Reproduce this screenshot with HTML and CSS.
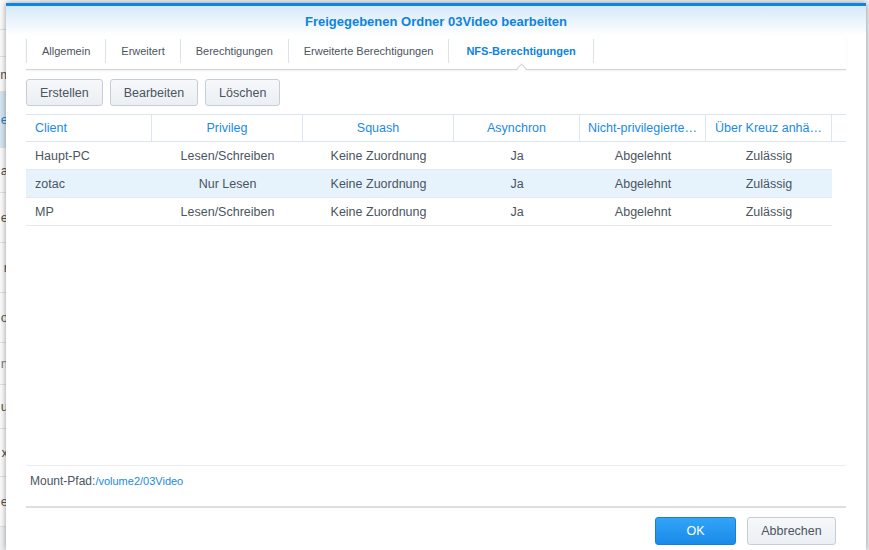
FILE: index.html
```html
<!DOCTYPE html>
<html lang="de">
<head>
    <meta charset="UTF-8">
    <meta name="viewport" content="width=device-width, initial-scale=1.0">
    <title>Freigegebenen Ordner 03Video bearbeiten</title>
    <link rel="stylesheet" href="styles.css">
</head>
<body>
    <!-- Hintergrund: Liste der Systemsteuerung, nur am Rand sichtbar -->
    <div class="backdrop">
        <div class="side-row h30"></div>
        <div class="side-row h27"></div>
        <div class="side-row h35 wide"><span>m</span></div>
        <div class="side-row h56 selected"><span>e</span></div>
        <div class="side-row h45"><span>a</span></div>
        <div class="side-row h50"><span>e</span></div>
        <div class="side-row h50"><span>r</span></div>
        <div class="side-row h50"><span>o</span></div>
        <div class="side-row h42 muted"><span>n</span></div>
        <div class="side-row h44"><span>u</span></div>
        <div class="side-row h48"><span>x</span></div>
        <div class="side-row h50"><span>e</span></div>
    </div>

    <div class="dialog">
        <div class="dialog-header">Freigegebenen Ordner 03Video bearbeiten</div>

        <div class="dialog-body">
            <div class="tabs">
                <div class="tab">Allgemein</div>
                <div class="tab">Erweitert</div>
                <div class="tab">Berechtigungen</div>
                <div class="tab">Erweiterte Berechtigungen</div>
                <div class="tab active">NFS-Berechtigungen</div>
            </div>

            <div class="toolbar">
                <button class="btn">Erstellen</button>
                <button class="btn">Bearbeiten</button>
                <button class="btn">Löschen</button>
            </div>

            <div class="grid">
                <div class="grid-head">
                    <div class="cell left">Client</div>
                    <div class="cell">Privileg</div>
                    <div class="cell">Squash</div>
                    <div class="cell">Asynchron</div>
                    <div class="cell">Nicht-privilegierte…</div>
                    <div class="cell">Über Kreuz anhä…</div>
                    <div class="cell"></div>
                </div>
                <div class="grid-row">
                    <div class="cell left">Haupt-PC</div>
                    <div class="cell">Lesen/Schreiben</div>
                    <div class="cell">Keine Zuordnung</div>
                    <div class="cell">Ja</div>
                    <div class="cell">Abgelehnt</div>
                    <div class="cell">Zulässig</div>
                </div>
                <div class="grid-row selected">
                    <div class="cell left">zotac</div>
                    <div class="cell">Nur Lesen</div>
                    <div class="cell">Keine Zuordnung</div>
                    <div class="cell">Ja</div>
                    <div class="cell">Abgelehnt</div>
                    <div class="cell">Zulässig</div>
                </div>
                <div class="grid-row">
                    <div class="cell left">MP</div>
                    <div class="cell">Lesen/Schreiben</div>
                    <div class="cell">Keine Zuordnung</div>
                    <div class="cell">Ja</div>
                    <div class="cell">Abgelehnt</div>
                    <div class="cell">Zulässig</div>
                </div>
            </div>

            <div class="mount-path">
                Mount-Pfad:<a href="#">/volume2/03Video</a>
            </div>
        </div>

        <div class="dialog-footer">
            <button class="btn primary">OK</button>
            <button class="btn">Abbrechen</button>
        </div>
    </div>
</body>
</html>
```

FILE: styles.css
```css
html, body {
    margin: 0;
    height: 100%;
}
body {
    font-family: 'Liberation Sans', Arial, sans-serif;
    background: #eef0f2;
    overflow: hidden;
    position: relative;
}

/* Hintergrundliste */
.backdrop {
    width: 40px;
    display: flex;
    flex-direction: column;
    background: #fafafa;
}
.side-row {
    display: flex;
    justify-content: flex-end;
    align-items: center;
    border-bottom: 1px solid #dfe3e7;
    box-sizing: border-box;
    width: 8px;
    white-space: nowrap;
    font-size: 13px;
    color: #555;
}
.side-row.wide { width: 11px; }
.side-row.selected {
    background: #d6e5f3;
    color: #2a7ac6;
}
.side-row.muted { color: #6a7d92; }
.h27 { height: 27px; }
.h30 { height: 30px; }
.h35 { height: 35px; }
.h42 { height: 42px; }
.h44 { height: 44px; }
.h45 { height: 45px; }
.h48 { height: 48px; }
.h50 { height: 50px; }
.h56 { height: 56px; }

/* Dialog */
.dialog {
    position: absolute;
    left: 6px;
    top: 3px;
    width: 860px;
    height: 547px;
    background: #fff;
    box-shadow: 0 0 6px rgba(0, 0, 0, 0.4);
    display: flex;
    flex-direction: column;
}
.dialog-header {
    border-top: 3px solid #0b86e3;
    height: 30px;
    line-height: 32px;
    text-align: center;
    font-size: 13px;
    font-weight: bold;
    color: #0d83dd;
    background: linear-gradient(to bottom, #d6e9f9, #ffffff);
}
.dialog-body {
    flex: 1;
    display: flex;
    flex-direction: column;
    padding: 0 20px;
}

/* Reiter */
.tabs {
    display: flex;
    height: 34px;
    padding-top: 3px;
    border-bottom: 1px solid #d2d4d6;
    box-shadow: 0 1px 2px rgba(0, 0, 0, 0.06);
    box-sizing: border-box;
}
.tab {
    position: relative;
    font-size: 11px;
    color: #4b5560;
    padding: 0 15px;
    height: 24px;
    line-height: 24px;
    border-left: 1px solid #dbe2ea;
}
.tab:last-child {
    border-right: 1px solid #dbe2ea;
}
.tab.active {
    font-weight: bold;
    color: #0d83dd;
    padding: 0 17px;
}
.tab.active::after {
    content: "";
    position: absolute;
    left: 50%;
    bottom: -9px;
    width: 6px;
    height: 6px;
    margin-left: -3px;
    background: #fff;
    border-left: 1px solid #d2d4d6;
    border-top: 1px solid #d2d4d6;
    transform: rotate(45deg);
}

/* Werkzeugleiste */
.toolbar {
    display: flex;
    gap: 7px;
    margin-top: 9px;
}
.btn {
    font-family: inherit;
    font-size: 12.5px;
    color: #4b5560;
    height: 27px;
    padding: 0 13px;
    border: 1px solid #c5ced8;
    border-radius: 3px;
    background: linear-gradient(to bottom, #f6f8fa, #ebeff3);
    cursor: pointer;
}
.btn.primary {
    color: #fff;
    border-color: #1a7fd4;
    background: linear-gradient(to bottom, #31a5f7, #1a8ae8);
}

/* Tabelle */
.grid {
    margin-top: 8px;
    flex: 1;
}
.grid-head,
.grid-row {
    display: grid;
    grid-template-columns: 126px 151px 151px 126px 126px 126px 14px;
}
.grid-row {
    grid-template-columns: 126px 151px 151px 126px 126px 126px;
    width: 806px;
    border-bottom: 1px solid #e5e9ed;
}
.grid-head {
    border-top: 1px solid #dce6f0;
    border-bottom: 1px solid #dce6f0;
}
.grid-head .cell {
    color: #1a8ae6;
    height: 26px;
    line-height: 26px;
    border-right: 1px solid #dce6f0;
}
.grid-head .cell:last-child {
    border-right: none;
}
.cell {
    font-size: 12.5px;
    color: #4b5560;
    text-align: center;
    height: 27px;
    line-height: 28px;
    white-space: nowrap;
    overflow: hidden;
}
.cell.left {
    text-align: left;
    padding-left: 9px;
}
.grid-row.selected {
    background: #e6f3fd;
}

/* Mount-Pfad */
.mount-path {
    border-top: 1px solid #ececec;
    border-bottom: 2px solid #dedede;
    height: 43px;
    padding: 8px 0 0 4px;
    box-sizing: border-box;
    font-size: 12px;
    color: #4b5560;
}
.mount-path a {
    color: #1a8ae6;
    font-size: 11px;
    text-decoration: none;
}

/* Fußzeile */
.dialog-footer {
    display: flex;
    justify-content: flex-end;
    gap: 11px;
    padding: 9px 30px 0 0;
    height: 42px;
    box-sizing: border-box;
}
.dialog-footer .btn {
    height: 28px;
    font-size: 12.5px;
}
.dialog-footer .btn.primary {
    width: 81px;
}
.dialog-footer .btn:last-child {
    width: 89px;
}
```
